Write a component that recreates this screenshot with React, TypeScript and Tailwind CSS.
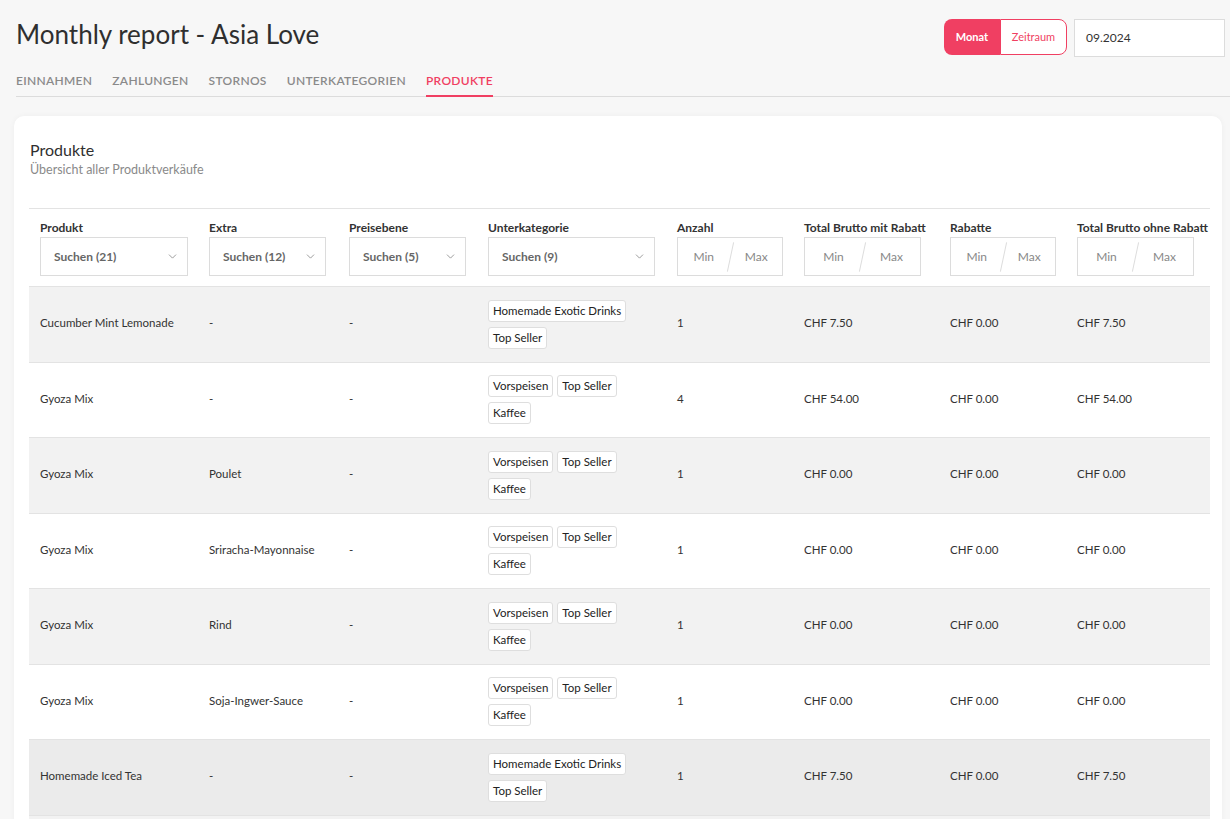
import { ChevronDown } from "lucide-react";

type Row = {
  produkt: string;
  extra: string;
  preis: string;
  tags: string[][];
  anzahl: string;
  mit: string;
  rabatte: string;
  ohne: string;
  hover?: boolean;
};

const rows: Row[] = [
  { produkt: "Cucumber Mint Lemonade", extra: "-", preis: "-", tags: [["Homemade Exotic Drinks"], ["Top Seller"]], anzahl: "1", mit: "CHF 7.50", rabatte: "CHF 0.00", ohne: "CHF 7.50" },
  { produkt: "Gyoza Mix", extra: "-", preis: "-", tags: [["Vorspeisen", "Top Seller"], ["Kaffee"]], anzahl: "4", mit: "CHF 54.00", rabatte: "CHF 0.00", ohne: "CHF 54.00" },
  { produkt: "Gyoza Mix", extra: "Poulet", preis: "-", tags: [["Vorspeisen", "Top Seller"], ["Kaffee"]], anzahl: "1", mit: "CHF 0.00", rabatte: "CHF 0.00", ohne: "CHF 0.00" },
  { produkt: "Gyoza Mix", extra: "Sriracha-Mayonnaise", preis: "-", tags: [["Vorspeisen", "Top Seller"], ["Kaffee"]], anzahl: "1", mit: "CHF 0.00", rabatte: "CHF 0.00", ohne: "CHF 0.00" },
  { produkt: "Gyoza Mix", extra: "Rind", preis: "-", tags: [["Vorspeisen", "Top Seller"], ["Kaffee"]], anzahl: "1", mit: "CHF 0.00", rabatte: "CHF 0.00", ohne: "CHF 0.00" },
  { produkt: "Gyoza Mix", extra: "Soja-Ingwer-Sauce", preis: "-", tags: [["Vorspeisen", "Top Seller"], ["Kaffee"]], anzahl: "1", mit: "CHF 0.00", rabatte: "CHF 0.00", ohne: "CHF 0.00" },
  { produkt: "Homemade Iced Tea", extra: "-", preis: "-", tags: [["Homemade Exotic Drinks"], ["Top Seller"]], anzahl: "1", mit: "CHF 7.50", rabatte: "CHF 0.00", ohne: "CHF 7.50", hover: true },
];

const cols = ["w-[169px]", "w-[140px]", "w-[139px]", "w-[189px]", "w-[127px]", "w-[146px]", "w-[127px]", "w-[144px]"];

const tabs = ["EINNAHMEN", "ZAHLUNGEN", "STORNOS", "UNTERKATEGORIEN", "PRODUKTE"];

function Select({ label, w }: { label: string; w: string }) {
  return (
    <div className={`${w} h-[39px] border border-[#dcdcdc] bg-white flex items-center justify-between pl-[13px] pr-[8px]`}>
      <span className="text-[12px] font-bold text-[#666]">{label}</span>
      <ChevronDown size={13} strokeWidth={1.5} className="text-[#888]" />
    </div>
  );
}

function Range({ w }: { w: string }) {
  return (
    <div className={`${w} h-[39px] border border-[#dcdcdc] bg-white flex items-center text-[12px] text-[#888]`}>
      <span className="flex-1 text-center">Min</span>
      <span className="w-px h-[30px] bg-[#ddd] rotate-[12deg]" />
      <span className="flex-1 text-center">Max</span>
    </div>
  );
}

export default function App() {
  return (
    <div className="h-[819px] overflow-hidden bg-[#f7f7f7] font-['Lato','Open_Sans',sans-serif] text-[#333]">
      <div className="flex items-start justify-between pl-[16px] pr-[5px] pt-[19px]">
        <h1 className="text-[26px] leading-[32px] text-[#2f2f2f] -mt-[1px]">Monthly report - Asia Love</h1>
        <div className="flex items-start gap-[7px]">
          <div className="flex">
            <button className="h-[36px] w-[56px] rounded-l-[8px] bg-[#f03f62] text-white text-[11px] font-bold">Monat</button>
            <button className="h-[36px] w-[67px] rounded-r-[8px] border border-[#f03f62] bg-white text-[#f03f62] text-[11px]">Zeitraum</button>
          </div>
          <div className="h-[38px] w-[151px] border border-[#dcdcdc] bg-white flex items-center pl-[11px] text-[12px] text-[#333]">09.2024</div>
        </div>
      </div>

      <div className="ml-[16px] mt-[15px] flex gap-[20px] border-b border-[#dcdcdc]">
        {tabs.map((t) => (
          <div
            key={t}
            className={`pb-[5px] text-[12px] tracking-[0.3px] font-semibold ${
              t === "PRODUKTE" ? "text-[#f03f62] border-b-[2px] border-[#f03f62] -mb-px" : "text-[#8a8a8a]"
            }`}
          >
            {t}
          </div>
        ))}
      </div>

      <div className="ml-[14px] mr-[8px] mt-[19px] bg-white rounded-[10px] shadow-[0_0_6px_rgba(0,0,0,0.04)] pl-[15px] pr-[12px] pt-[24px]">
        <div className="pl-[1px]">
          <div className="text-[16px] leading-[20px] text-[#2f2f2f]">Produkte</div>
          <div className="text-[12.5px] leading-[18px] text-[#8a8a8a] mt-[1px]">Übersicht aller Produktverkäufe</div>
        </div>

        <div className="mt-[29px] border-t border-[#e3e3e3] border-b pb-[10px]">
          <div className="flex pt-[12px]">
            {[
              "Produkt",
              "Extra",
              "Preisebene",
              "Unterkategorie",
              "Anzahl",
              "Total Brutto mit Rabatt",
              "Rabatte",
              "Total Brutto ohne Rabatt",
            ].map((h, i) => (
              <div key={h} className={`${cols[i]} pl-[11px] text-[12px] font-bold leading-[14px] whitespace-nowrap`}>
                {h}
              </div>
            ))}
          </div>
          <div className="flex mt-[2px]">
            <div className={`${cols[0]} pl-[11px]`}><Select label="Suchen (21)" w="w-[148px]" /></div>
            <div className={`${cols[1]} pl-[11px]`}><Select label="Suchen (12)" w="w-[117px]" /></div>
            <div className={`${cols[2]} pl-[11px]`}><Select label="Suchen (5)" w="w-[117px]" /></div>
            <div className={`${cols[3]} pl-[11px]`}><Select label="Suchen (9)" w="w-[167px]" /></div>
            <div className={`${cols[4]} pl-[11px]`}><Range w="w-[106px]" /></div>
            <div className={`${cols[5]} pl-[11px]`}><Range w="w-[117px]" /></div>
            <div className={`${cols[6]} pl-[11px]`}><Range w="w-[106px]" /></div>
            <div className={`${cols[7]} pl-[11px]`}><Range w="w-[117px]" /></div>
          </div>
        </div>

        {rows.map((r, idx) => (
          <div
            key={idx}
            className={`flex items-center h-[75.5px] border-b border-[#e3e3e3] text-[11.5px] leading-[14px] text-[#333] ${
              r.hover ? "bg-[#ebebeb]" : idx % 2 === 0 ? "bg-[#f2f2f2]" : "bg-white"
            }`}
          >
            <div className={`${cols[0]} pl-[11px] -mt-[2px]`}>{r.produkt}</div>
            <div className={`${cols[1]} pl-[11px] -mt-[2px]`}>{r.extra}</div>
            <div className={`${cols[2]} pl-[11px] -mt-[2px]`}>{r.preis}</div>
            <div className={`${cols[3]} pl-[11px] flex flex-col gap-[5px]`}>
              {r.tags.map((line, li) => (
                <div key={li} className="flex gap-[4px]">
                  {line.map((t) => (
                    <span
                      key={t}
                      className="h-[22px] px-[4px] flex items-center rounded-[3px] border border-[#dedede] bg-white text-[11.5px] text-[#222]"
                    >
                      {t}
                    </span>
                  ))}
                </div>
              ))}
            </div>
            <div className={`${cols[4]} pl-[11px] -mt-[2px]`}>{r.anzahl}</div>
            <div className={`${cols[5]} pl-[11px] -mt-[2px]`}>{r.mit}</div>
            <div className={`${cols[6]} pl-[11px] -mt-[2px]`}>{r.rabatte}</div>
            <div className={`${cols[7]} pl-[11px] -mt-[2px]`}>{r.ohne}</div>
          </div>
        ))}
        <div className="h-[20px] bg-[#f2f2f2]" />
      </div>
    </div>
  );
}
